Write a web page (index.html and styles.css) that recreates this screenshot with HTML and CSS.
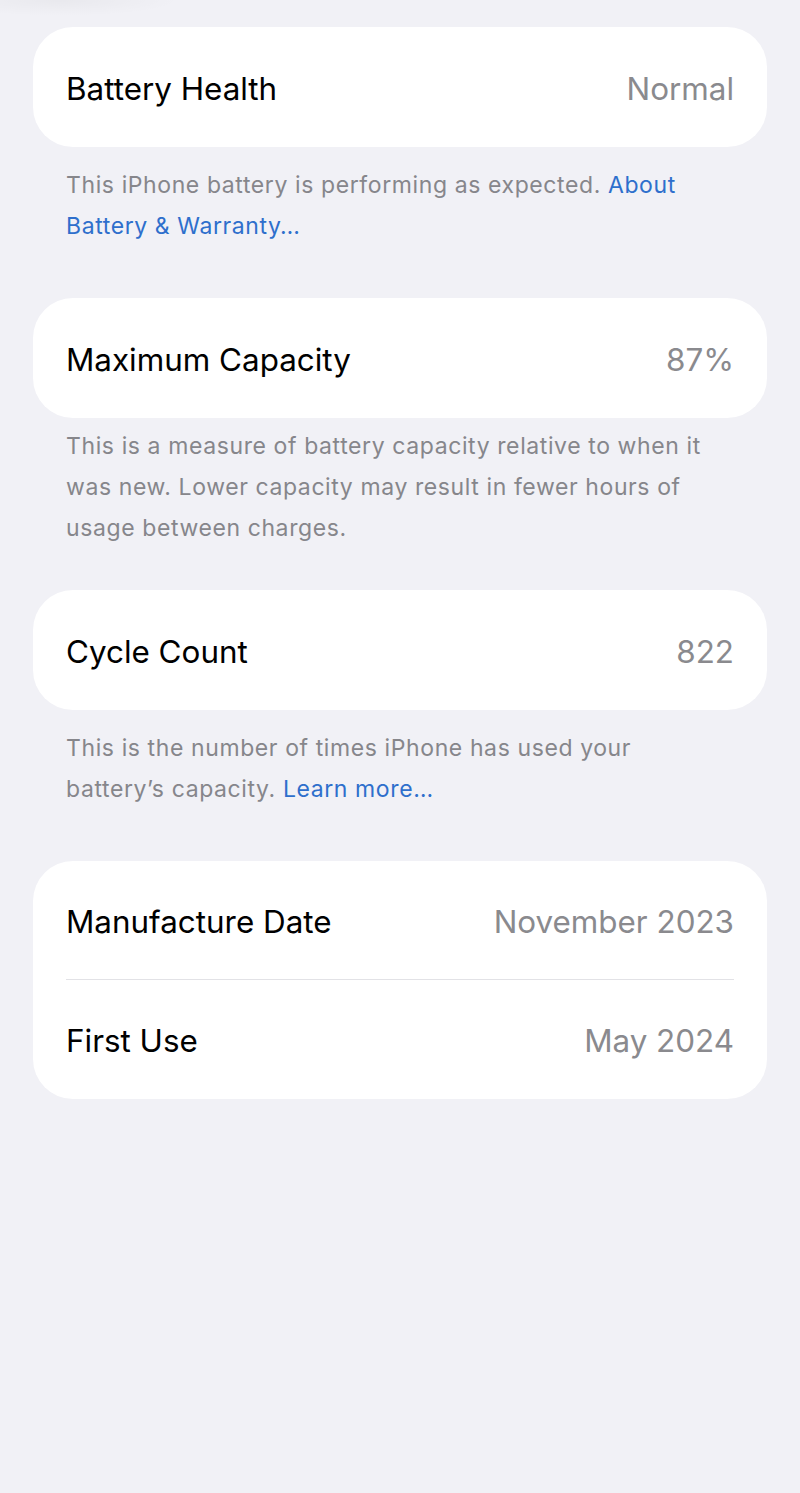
FILE: index.html
```html
<!DOCTYPE html>
<html lang="en">
<head>
    <meta charset="UTF-8">
    <meta name="viewport" content="width=device-width, initial-scale=1.0">
    <title>Battery Health</title>
    <link rel="stylesheet" href="styles.css">
</head>
<body>
    <div class="page">
        <div class="card">
            <div class="row">
                <span class="label">Battery Health</span>
                <span class="value">Normal</span>
            </div>
        </div>
        <p class="note">This iPhone battery is performing as expected. <a href="#">About Battery &amp; Warranty…</a></p>

        <div class="card">
            <div class="row">
                <span class="label">Maximum Capacity</span>
                <span class="value">87%</span>
            </div>
        </div>
        <p class="note note-tight">This is a measure of battery capacity relative to when it was new. Lower capacity may result in fewer hours of usage between charges.</p>

        <div class="card">
            <div class="row">
                <span class="label">Cycle Count</span>
                <span class="value">822</span>
            </div>
        </div>
        <p class="note">This is the number of times iPhone has used your battery’s capacity. <a href="#">Learn more…</a></p>

        <div class="card">
            <div class="row">
                <span class="label">Manufacture Date</span>
                <span class="value">November 2023</span>
            </div>
            <div class="row">
                <span class="label">First Use</span>
                <span class="value">May 2024</span>
            </div>
        </div>
    </div>
</body>
</html>
```

FILE: styles.css
```css
body {
    font-family: 'Inter', 'Liberation Sans', sans-serif;
    margin: 0;
    padding: 0;
    min-height: 100vh;
    background:
        radial-gradient(ellipse 120px 16px at 60px 0, rgba(0, 0, 0, 0.035), transparent),
        #f1f1f6;
}
.page {
    padding: 27px 33px 0;
}
.card {
    background-color: #fff;
    border-radius: 40px;
    padding: 0 33px;
}
.row {
    display: flex;
    align-items: center;
    justify-content: space-between;
    height: 120px;
    padding-top: 3px;
    box-sizing: border-box;
}
.row + .row {
    border-top: 1px solid #e2e2e6;
    height: 120px;
}
.card .row:first-child:not(:last-child) {
    height: 118px;
}
.label {
    font-size: 31.4px;
    color: #000;
}
.value {
    font-size: 31.4px;
    color: #8a8a8e;
}
.note {
    margin: 0 0 51px;
    padding: 18px 33px 0;
    font-size: 23px;
    letter-spacing: 0.6px;
    line-height: 41px;
    color: #86868b;
}
.note-tight {
    padding-top: 8px;
    margin-bottom: 41px;
}
.note a {
    color: #2e6fcc;
    text-decoration: none;
}
```
